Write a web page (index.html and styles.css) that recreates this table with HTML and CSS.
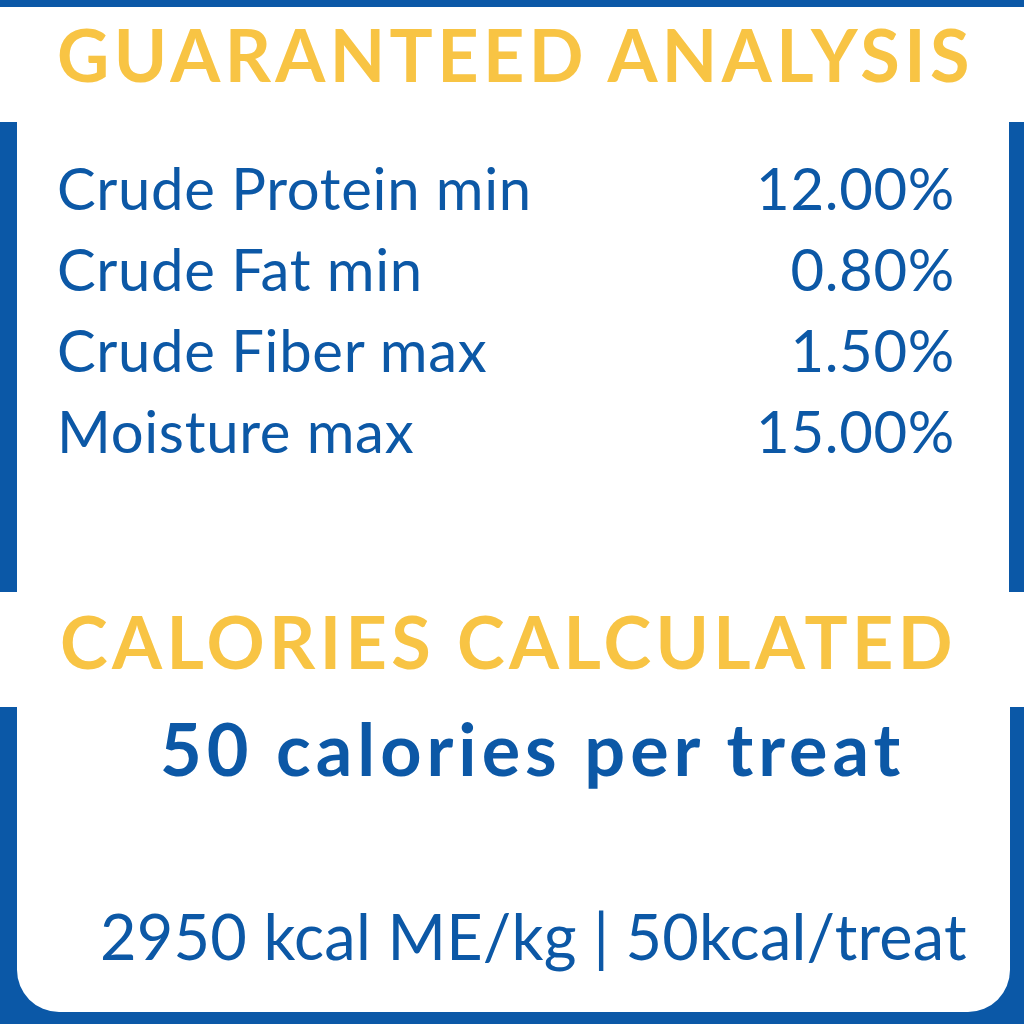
FILE: index.html
```html
<!DOCTYPE html>
<html lang="en">
<head>
    <meta charset="UTF-8">
    <meta name="viewport" content="width=device-width, initial-scale=1.0">
    <title>Guaranteed Analysis</title>
    <link rel="stylesheet" href="styles.css">
</head>
<body>
    <div class="card">
        <div class="top-bar"></div>

        <h1 class="heading heading-first">GUARANTEED ANALYSIS</h1>

        <div class="panel">
            <div class="row">
                <span class="label">Crude Protein min</span>
                <span class="value">12.00%</span>
            </div>
            <div class="row">
                <span class="label">Crude Fat min</span>
                <span class="value">0.80%</span>
            </div>
            <div class="row">
                <span class="label">Crude Fiber max</span>
                <span class="value">1.50%</span>
            </div>
            <div class="row">
                <span class="label">Moisture max</span>
                <span class="value">15.00%</span>
            </div>
        </div>

        <h1 class="heading heading-second">CALORIES CALCULATED</h1>

        <div class="panel-bottom">
            <div class="inner">
                <p class="per-treat">50 calories per treat</p>
                <p class="energy">2950 kcal ME/kg | 50kcal/treat</p>
            </div>
        </div>
    </div>
</body>
</html>
```

FILE: styles.css
```css
* {
    box-sizing: border-box;
    margin: 0;
    padding: 0;
}

body {
    font-family: 'Lato', 'Open Sans', sans-serif;
    background-color: #ffffff;
}

.card {
    width: 1024px;
    height: 1024px;
    display: flex;
    flex-direction: column;
    background: #ffffff;
    color: #0c58a6;
}

.top-bar {
    height: 7px;
    background-color: #0b58a7;
}

.heading {
    color: #f8c444;
    font-size: 72px;
    font-weight: 700;
    line-height: 1;
    white-space: nowrap;
    letter-spacing: 4.4px;
}

.heading-first {
    height: 115px;
    padding: 11px 0 0 57px;
}

.heading-second {
    height: 115px;
    padding: 13px 0 0 60px;
}

.panel {
    height: 470px;
    border-left: 17px solid #0b58a7;
    border-right: 15px solid #0b58a7;
    padding: 25px 54px 0 40px;
}

.row {
    display: flex;
    justify-content: space-between;
    font-size: 58px;
    line-height: 81px;
    letter-spacing: 0.7px;
    white-space: nowrap;
}

.panel-bottom {
    flex: 1;
    background-color: #0b58a7;
    padding: 0 14px 12px 17px;
    display: flex;
}

.inner {
    flex: 1;
    background: #ffffff;
    border-radius: 0 0 42px 42px;
    padding-top: 5px;
}

.per-treat {
    font-size: 72px;
    font-weight: 700;
    line-height: 1;
    letter-spacing: 5px;
    padding-left: 143px;
    white-space: nowrap;
}

.energy {
    margin-top: 120px;
    font-size: 63px;
    line-height: 1;
    letter-spacing: 0.25px;
    padding-left: 83px;
    white-space: nowrap;
}
```
